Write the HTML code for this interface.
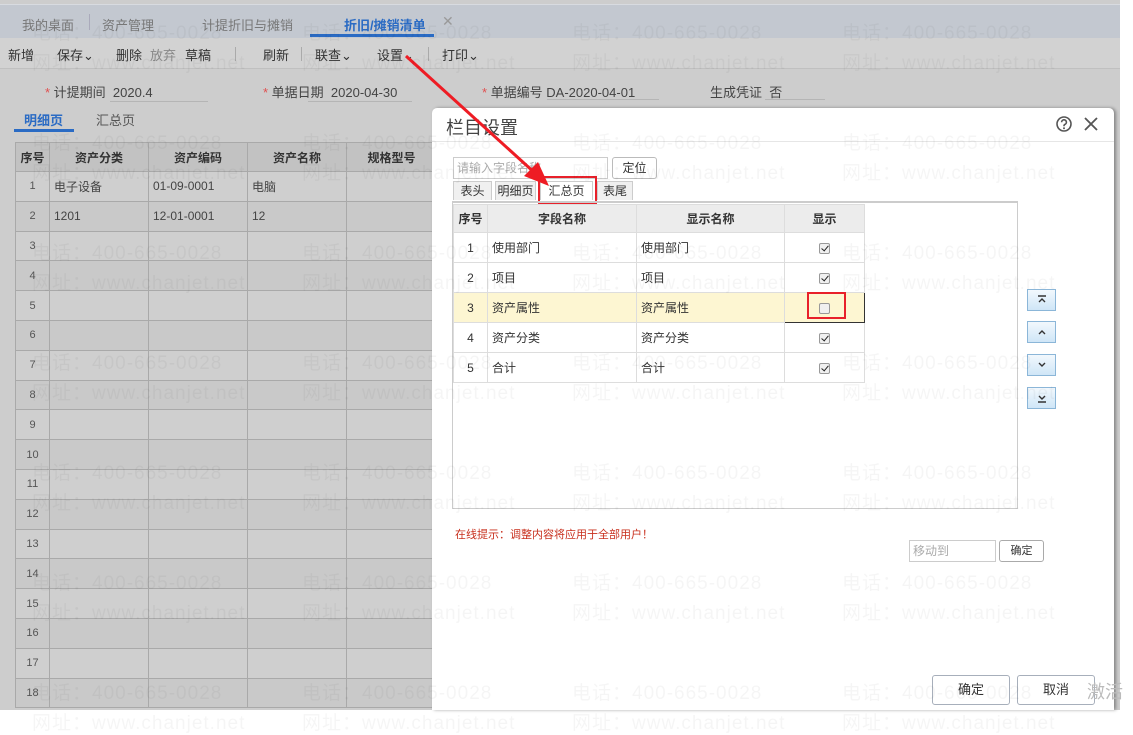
<!DOCTYPE html>
<html><head><meta charset="utf-8"><style>
*{margin:0;padding:0;box-sizing:border-box}
body{width:1133px;height:731px;overflow:hidden;background:#fff;font-family:"Liberation Sans","Noto Sans CJK SC",sans-serif;font-size:13px;color:#333;position:relative}
.a{position:absolute;white-space:nowrap}
#page{position:absolute;left:0;top:0;width:1120px;height:710px;background:#cdcdcd}
.tabbar{left:0;top:4px;width:1120px;height:34px;background:#c3c8d0;border-top:1px solid #d8dbe0}
.tool{left:0;top:38px;width:1120px;height:31px;background:#d2d2d2;border-bottom:1px solid #c0c0c0}
.ul{height:1px;background:#b5b5b5}
.lt{position:absolute;left:15px;top:142px;border-collapse:collapse;font-size:12px;table-layout:fixed}
.lt td,.lt th{border:1px solid #a9a9a9;height:29.8px;padding:0 4px;color:#444;white-space:nowrap;overflow:hidden}
.lt th{background:#c2c2c2;font-weight:bold;color:#333;height:29px}
.lt tr:nth-child(odd) td{background:#c9c9c9}
.lt tr:nth-child(even) td{background:#cfcfcf}
.lt td:first-child{text-align:center;color:#555;font-size:11px}
#dlg{position:absolute;left:432px;top:108px;width:682px;height:602px;background:#fff;border-radius:5px 5px 0 0;box-shadow:2px 0 3px rgba(0,0,0,.35)}
.it{position:absolute;left:21px;top:96px;border-collapse:collapse;font-size:12px;table-layout:fixed}
.it td,.it th{border:1px solid #ddd;height:30px;padding:0 4px;white-space:nowrap}
.it th{background:#ececec;font-weight:bold;height:28px}
.it td:first-child{text-align:center}
.cb{display:inline-block;width:11px;height:11px;border:1px solid #999;border-radius:2px;background:#f0f0f0;position:relative;vertical-align:middle}
.cb.k::after{content:"";position:absolute;left:3px;top:0px;width:3px;height:6px;border:solid #222;border-width:0 1.5px 1.5px 0;transform:rotate(40deg)}
.sb{position:absolute;left:595px;width:29px;height:22px;border:1px solid #8bb6d8;background:linear-gradient(#f2f8fd,#cfe6f7);text-align:center}
.btn{position:absolute;border:1px solid #a7afbb;border-radius:3px;background:#fff;text-align:center}
.tb{position:absolute;top:73px;height:19px;border:1px solid #ccc;border-bottom:none;background:#f0f0f0;font-size:12px;text-align:center;line-height:18px}
.wm{position:absolute;color:rgba(0,0,0,.04);font-size:19px;letter-spacing:1px;white-space:nowrap;font-family:"Liberation Sans","Noto Sans CJK SC",sans-serif}
</style></head><body>
<div id="page">
<div class="a tabbar"></div>
<div class="a" style="left:22px;top:15px;color:#777">我的桌面</div>
<div class="a" style="left:89px;top:14px;width:1px;height:16px;background:#aab"></div>
<div class="a" style="left:102px;top:15px;color:#777">资产管理</div>
<div class="a" style="left:202px;top:15px;color:#777">计提折旧与摊销</div>
<div class="a" style="left:344px;top:15px;color:#2a6bc4;font-weight:bold">折旧/摊销清单</div>
<div class="a" style="left:442px;top:13px;color:#999;font-size:14px">✕</div>
<div class="a" style="left:310px;top:34px;width:124px;height:3px;background:#2a6bc4"></div>
<div class="a tool"></div>
<div class="a" style="left:8px;top:45px">新增</div>
<div class="a" style="left:57px;top:45px">保存⌄</div>
<div class="a" style="left:116px;top:45px">删除</div>
<div class="a" style="left:150px;top:45px;color:#888">放弃</div>
<div class="a" style="left:185px;top:45px">草稿</div>
<div class="a" style="left:235px;top:47px;width:1px;height:14px;background:#aaa"></div>
<div class="a" style="left:263px;top:45px">刷新</div>
<div class="a" style="left:301px;top:47px;width:1px;height:14px;background:#aaa"></div>
<div class="a" style="left:315px;top:45px">联查⌄</div>
<div class="a" style="left:377px;top:45px">设置⌄</div>
<div class="a" style="left:428px;top:47px;width:1px;height:14px;background:#aaa"></div>
<div class="a" style="left:442px;top:45px">打印⌄</div>
<div class="a" style="left:45px;top:82px;color:#444"><span style="color:#e05050">*</span> 计提期间 &nbsp;2020.4</div>
<div class="a ul" style="left:110px;top:101px;width:98px"></div>
<div class="a" style="left:263px;top:82px;color:#444"><span style="color:#e05050">*</span> 单据日期 &nbsp;2020-04-30</div>
<div class="a ul" style="left:308px;top:101px;width:104px"></div>
<div class="a" style="left:482px;top:82px;color:#444"><span style="color:#e05050">*</span> 单据编号 DA-2020-04-01</div>
<div class="a ul" style="left:547px;top:99px;width:112px"></div>
<div class="a" style="left:710px;top:82px;color:#444">生成凭证 &nbsp;否</div>
<div class="a ul" style="left:765px;top:99px;width:60px"></div>
<div class="a" style="left:24px;top:110px;color:#2a6bc4;font-weight:bold">明细页</div>
<div class="a" style="left:96px;top:110px;color:#555">汇总页</div>
<div class="a" style="left:14px;top:129px;width:60px;height:3px;background:#2a6bc4"></div>
<table class="lt">
<tr><th style="width:34px">序号</th><th style="width:99px">资产分类</th><th style="width:99px">资产编码</th><th style="width:99px">资产名称</th><th style="width:90px">规格型号</th></tr>
<tr><td>1</td><td>电子设备</td><td>01-09-0001</td><td>电脑</td><td></td></tr>
<tr><td>2</td><td>1201</td><td>12-01-0001</td><td>12</td><td></td></tr>
<tr><td>3</td><td></td><td></td><td></td><td></td></tr>
<tr><td>4</td><td></td><td></td><td></td><td></td></tr>
<tr><td>5</td><td></td><td></td><td></td><td></td></tr>
<tr><td>6</td><td></td><td></td><td></td><td></td></tr>
<tr><td>7</td><td></td><td></td><td></td><td></td></tr>
<tr><td>8</td><td></td><td></td><td></td><td></td></tr>
<tr><td>9</td><td></td><td></td><td></td><td></td></tr>
<tr><td>10</td><td></td><td></td><td></td><td></td></tr>
<tr><td>11</td><td></td><td></td><td></td><td></td></tr>
<tr><td>12</td><td></td><td></td><td></td><td></td></tr>
<tr><td>13</td><td></td><td></td><td></td><td></td></tr>
<tr><td>14</td><td></td><td></td><td></td><td></td></tr>
<tr><td>15</td><td></td><td></td><td></td><td></td></tr>
<tr><td>16</td><td></td><td></td><td></td><td></td></tr>
<tr><td>17</td><td></td><td></td><td></td><td></td></tr>
<tr><td>18</td><td></td><td></td><td></td><td></td></tr>
</table>
</div>

<div id="dlg">
<div class="a" style="left:14px;top:6px;font-size:18px;color:#444">栏目设置</div>
<div class="a" style="left:0;top:33px;width:682px;height:1px;background:#e6e6e6"></div>
<svg class="a" style="left:623px;top:7px" width="18" height="18" viewBox="0 0 18 18"><circle cx="9" cy="9" r="7" fill="none" stroke="#555" stroke-width="1.6"/><path d="M6.6 7.2a2.4 2.4 0 1 1 3.4 2.2c-.7.3-1 .8-1 1.5v.4" fill="none" stroke="#555" stroke-width="1.6"/><circle cx="9" cy="13.3" r="1" fill="#555"/></svg>
<svg class="a" style="left:651px;top:8px" width="16" height="16" viewBox="0 0 16 16"><path d="M2 2L14 14M14 2L2 14" stroke="#555" stroke-width="1.8"/></svg>
<div class="a" style="left:21px;top:49px;width:155px;height:22px;border:1px solid #ccc;color:#aaa;font-size:12px;line-height:20px;padding-left:3px">请输入字段名称</div>
<div class="btn" style="left:180px;top:49px;width:45px;height:22px;font-size:12px;line-height:20px;border-color:#bbb">定位</div>
<div class="tb" style="left:21px;width:39px">表头</div>
<div class="tb" style="left:63px;width:41px">明细页</div>
<div class="tb" style="left:108px;width:53px;background:#fff">汇总页</div>
<div class="tb" style="left:165px;width:36px">表尾</div>
<div class="a" style="left:106px;top:68px;width:59px;height:29px;border:2px solid #e8202a"></div>
<div class="a" style="left:20px;top:93px;width:566px;height:308px;border:1px solid #ccc;border-top:2px solid #ccc"></div>
<table class="it">
<tr><th style="width:34px">序号</th><th style="width:149px">字段名称</th><th style="width:148px">显示名称</th><th style="width:80px">显示</th></tr>
<tr><td>1</td><td>使用部门</td><td>使用部门</td><td style="text-align:center"><span class="cb k"></span></td></tr>
<tr><td>2</td><td>项目</td><td>项目</td><td style="text-align:center"><span class="cb k"></span></td></tr>
<tr style="background:#fdf6d2"><td>3</td><td>资产属性</td><td>资产属性</td><td style="text-align:center;border:1px solid #333"><span class="cb"></span></td></tr>
<tr><td>4</td><td>资产分类</td><td>资产分类</td><td style="text-align:center"><span class="cb k"></span></td></tr>
<tr><td>5</td><td>合计</td><td>合计</td><td style="text-align:center"><span class="cb k"></span></td></tr>
</table>
<div class="a" style="left:375px;top:184px;width:39px;height:27px;border:2px solid #e8202a"></div>
<div class="sb" style="top:181px"><svg width="12" height="12" viewBox="0 0 12 12" style="margin-top:4px"><path d="M2 2H10M3 8L6 5L9 8" fill="none" stroke="#333" stroke-width="1.4"/></svg></div>
<div class="sb" style="top:213px"><svg width="12" height="12" viewBox="0 0 12 12" style="margin-top:4px"><path d="M3 8L6 5L9 8" fill="none" stroke="#333" stroke-width="1.4"/></svg></div>
<div class="sb" style="top:246px"><svg width="12" height="12" viewBox="0 0 12 12" style="margin-top:4px"><path d="M3 4L6 7L9 4" fill="none" stroke="#333" stroke-width="1.4"/></svg></div>
<div class="sb" style="top:279px"><svg width="12" height="12" viewBox="0 0 12 12" style="margin-top:4px"><path d="M3 4L6 7L9 4M2 10H10" fill="none" stroke="#333" stroke-width="1.4"/></svg></div>
<div class="a" style="left:23px;top:418px;color:#c8301e;font-size:11px">在线提示：调整内容将应用于全部用户！</div>
<div class="a" style="left:477px;top:432px;width:87px;height:22px;border:1px solid #ccc;color:#aaa;font-size:12px;line-height:20px;padding-left:3px">移动到</div>
<div class="btn" style="left:567px;top:432px;width:45px;height:22px;font-size:11px;line-height:20px;border-color:#aaa">确定</div>
<div class="btn" style="left:500px;top:567px;width:78px;height:30px;line-height:28px">确定</div>
<div class="btn" style="left:585px;top:567px;width:78px;height:30px;line-height:28px">取消</div>
<div class="a" style="left:655px;top:570px;font-size:18px;color:#bbb">激活</div>
</div>

<svg class="a" style="left:0;top:0" width="1133" height="731"><line x1="406" y1="56" x2="536" y2="174" stroke="#ee1c24" stroke-width="3"/><polygon points="549,186 524,176 538,162" fill="#ee1c24"/></svg>

<div class="wm" style="left:32px;top:18px">电话：400-665-0028</div>
<div class="wm" style="left:302px;top:18px">电话：400-665-0028</div>
<div class="wm" style="left:572px;top:18px">电话：400-665-0028</div>
<div class="wm" style="left:842px;top:18px">电话：400-665-0028</div>
<div class="wm" style="left:32px;top:48px">网址：www.chanjet.net</div>
<div class="wm" style="left:302px;top:48px">网址：www.chanjet.net</div>
<div class="wm" style="left:572px;top:48px">网址：www.chanjet.net</div>
<div class="wm" style="left:842px;top:48px">网址：www.chanjet.net</div>
<div class="wm" style="left:32px;top:128px">电话：400-665-0028</div>
<div class="wm" style="left:302px;top:128px">电话：400-665-0028</div>
<div class="wm" style="left:572px;top:128px">电话：400-665-0028</div>
<div class="wm" style="left:842px;top:128px">电话：400-665-0028</div>
<div class="wm" style="left:32px;top:158px">网址：www.chanjet.net</div>
<div class="wm" style="left:302px;top:158px">网址：www.chanjet.net</div>
<div class="wm" style="left:572px;top:158px">网址：www.chanjet.net</div>
<div class="wm" style="left:842px;top:158px">网址：www.chanjet.net</div>
<div class="wm" style="left:32px;top:238px">电话：400-665-0028</div>
<div class="wm" style="left:302px;top:238px">电话：400-665-0028</div>
<div class="wm" style="left:572px;top:238px">电话：400-665-0028</div>
<div class="wm" style="left:842px;top:238px">电话：400-665-0028</div>
<div class="wm" style="left:32px;top:268px">网址：www.chanjet.net</div>
<div class="wm" style="left:302px;top:268px">网址：www.chanjet.net</div>
<div class="wm" style="left:572px;top:268px">网址：www.chanjet.net</div>
<div class="wm" style="left:842px;top:268px">网址：www.chanjet.net</div>
<div class="wm" style="left:32px;top:348px">电话：400-665-0028</div>
<div class="wm" style="left:302px;top:348px">电话：400-665-0028</div>
<div class="wm" style="left:572px;top:348px">电话：400-665-0028</div>
<div class="wm" style="left:842px;top:348px">电话：400-665-0028</div>
<div class="wm" style="left:32px;top:378px">网址：www.chanjet.net</div>
<div class="wm" style="left:302px;top:378px">网址：www.chanjet.net</div>
<div class="wm" style="left:572px;top:378px">网址：www.chanjet.net</div>
<div class="wm" style="left:842px;top:378px">网址：www.chanjet.net</div>
<div class="wm" style="left:32px;top:458px">电话：400-665-0028</div>
<div class="wm" style="left:302px;top:458px">电话：400-665-0028</div>
<div class="wm" style="left:572px;top:458px">电话：400-665-0028</div>
<div class="wm" style="left:842px;top:458px">电话：400-665-0028</div>
<div class="wm" style="left:32px;top:488px">网址：www.chanjet.net</div>
<div class="wm" style="left:302px;top:488px">网址：www.chanjet.net</div>
<div class="wm" style="left:572px;top:488px">网址：www.chanjet.net</div>
<div class="wm" style="left:842px;top:488px">网址：www.chanjet.net</div>
<div class="wm" style="left:32px;top:568px">电话：400-665-0028</div>
<div class="wm" style="left:302px;top:568px">电话：400-665-0028</div>
<div class="wm" style="left:572px;top:568px">电话：400-665-0028</div>
<div class="wm" style="left:842px;top:568px">电话：400-665-0028</div>
<div class="wm" style="left:32px;top:598px">网址：www.chanjet.net</div>
<div class="wm" style="left:302px;top:598px">网址：www.chanjet.net</div>
<div class="wm" style="left:572px;top:598px">网址：www.chanjet.net</div>
<div class="wm" style="left:842px;top:598px">网址：www.chanjet.net</div>
<div class="wm" style="left:32px;top:678px">电话：400-665-0028</div>
<div class="wm" style="left:302px;top:678px">电话：400-665-0028</div>
<div class="wm" style="left:572px;top:678px">电话：400-665-0028</div>
<div class="wm" style="left:842px;top:678px">电话：400-665-0028</div>
<div class="wm" style="left:32px;top:708px">网址：www.chanjet.net</div>
<div class="wm" style="left:302px;top:708px">网址：www.chanjet.net</div>
<div class="wm" style="left:572px;top:708px">网址：www.chanjet.net</div>
<div class="wm" style="left:842px;top:708px">网址：www.chanjet.net</div>
</body></html>
